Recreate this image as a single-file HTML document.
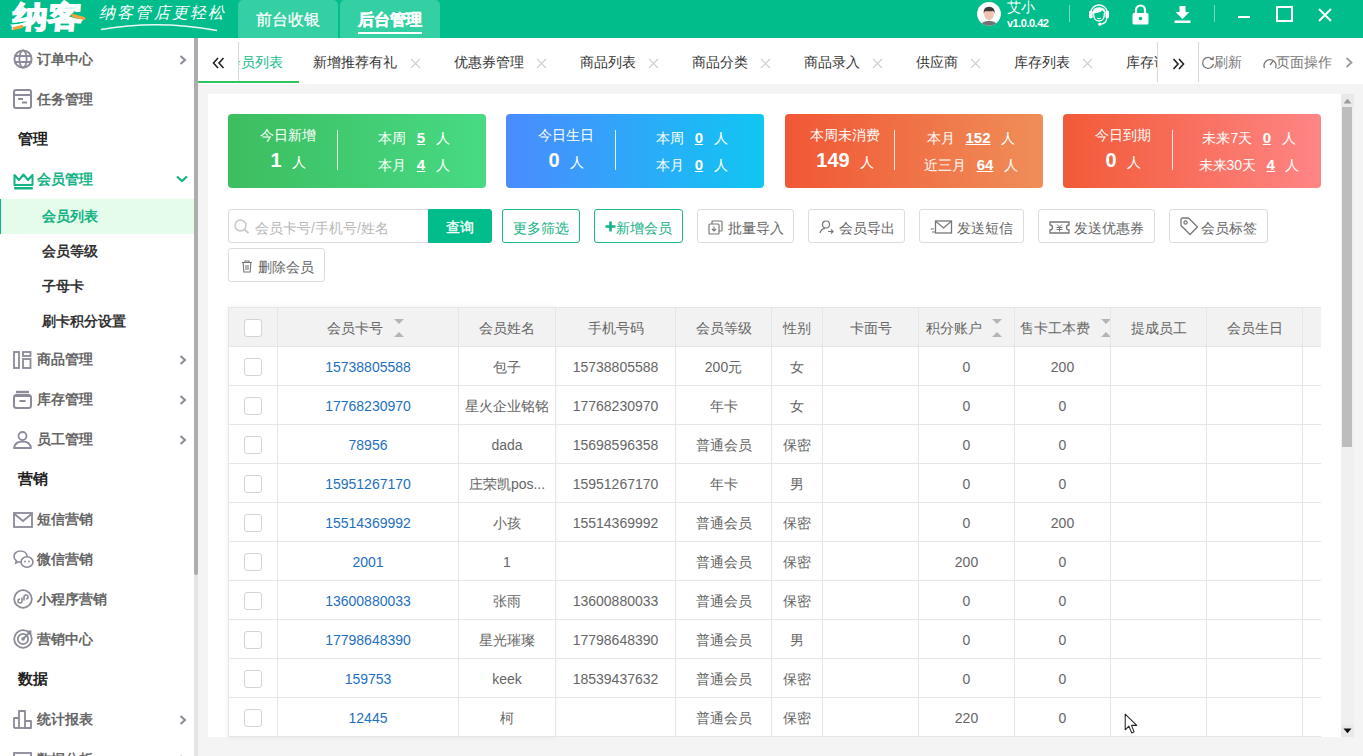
<!DOCTYPE html>
<html><head><meta charset="utf-8"><title>会员列表</title>
<style>
*{margin:0;padding:0;box-sizing:border-box}
html,body{width:1363px;height:756px;overflow:hidden}
body{position:relative;background:#f4f4f4;font-family:"Liberation Sans",sans-serif;font-size:14px;color:#333}
.a{position:absolute}
svg{position:absolute;display:block}
#hdr{position:absolute;left:0;top:0;width:1363px;height:38px;background:#00bd8b}
.htab{position:absolute;top:0;height:38px;width:100px;background:#34cfa3;border-radius:5px 5px 0 0;color:#fff;font-size:16px;line-height:40px;text-align:center}
#side{position:absolute;left:0;top:38px;width:194px;height:718px;background:#fff}
.mi{position:absolute;left:0;width:194px;height:40px;line-height:40px;font-size:14px;font-weight:bold;color:#666}
.mi span{position:absolute;left:37px;top:0}
.mi svg{left:13px;top:10px}
.mi svg.chev{position:absolute;left:179px;top:16px;width:8px;height:10px}
.sec{position:absolute;left:18px;height:40px;line-height:40px;font-size:15px;font-weight:bold;color:#222}
.sub{position:absolute;left:0;width:194px;height:35px;line-height:35px;font-size:14px;font-weight:bold;color:#333}
.sub span{position:absolute;left:42px}
#tabs{position:absolute;left:198px;top:38px;width:1165px;height:46px;background:#fff}
.tt{position:absolute;top:14px;height:20px;line-height:20px;font-size:14px;color:#333;white-space:nowrap}
#panel{position:absolute;left:208px;top:94px;width:1133px;height:643px;background:#fff}
.card{position:absolute;top:114px;height:74px;width:258px;border-radius:4px;color:#fff}
.card .t{position:absolute;top:9.5px;height:22px;line-height:22px;font-size:14px;text-align:center;white-space:nowrap}
.card .n{position:absolute;top:32px;height:28px;line-height:28px;text-align:center;white-space:nowrap}
.card .n b{font-size:20px;margin-right:10px}
.card .dv{position:absolute;left:109px;top:16px;width:1px;height:40px;background:rgba(255,255,255,.85)}
.card .r{position:absolute;height:22px;line-height:22px;font-size:14px;text-align:center;white-space:nowrap}
.card .r b{text-decoration:underline;font-size:15px;margin:0 10.5px 0 10.5px}
.btn{position:absolute;top:209px;height:34px;border:1px solid #dcdcdc;border-radius:3px;background:#fff;color:#666;font-size:14px;line-height:32px;white-space:nowrap}
.btn span{position:absolute;top:2px}
.btn.g{border-color:#19b98a;color:#13b386}
.tx{position:absolute;top:58px}
.tb{position:absolute}
.hl{position:absolute;left:228px;width:1093px;height:1px;background:#e6e6e6}
.vl{position:absolute;top:307px;width:1px;height:430px;background:#e6e6e6}
.cell{position:absolute;height:38px;line-height:40px;text-align:center;color:#666;font-size:14px;white-space:nowrap;overflow:hidden}
.cell.th{color:#666}
.cell.lk{color:#1e6fc0}
.cb{position:absolute;width:18px;height:18px;border:1px solid #d4d4d4;border-radius:3px;background:#fff}
.sort{display:inline-block;position:relative;width:15px;height:18px;margin-left:10.5px;vertical-align:middle;top:-1px}
.sort b{position:absolute;left:0;width:0;height:0;border-left:5px solid transparent;border-right:5px solid transparent}
.sort .dn{top:0;border-top:5px solid #b5b5b5}
.sort .up{top:13px;border-bottom:5px solid #b5b5b5}

</style></head><body>
<!-- header -->
<div id="hdr"></div>
<svg style="left:8px;top:0" width="84" height="36" viewBox="0 0 84 36">
  <text x="6" y="27" font-family="Liberation Sans" font-weight="bold" font-size="30" fill="#fff" stroke="#fff" stroke-width="1.4" textLength="70" lengthAdjust="spacingAndGlyphs" transform="skewX(-5)">纳客</text>
  <path d="M6 28.5 L14 26.5" stroke="#f4a23a" stroke-width="3" stroke-linecap="round"/>
  <path d="M65 15.5 L76 18.5" stroke="#f4a23a" stroke-width="3" stroke-linecap="round"/>
</svg>
<div class="a" style="left:99px;top:2px;height:22px;line-height:22px;font-family:'Liberation Serif',serif;font-style:italic;font-size:16px;color:#fff;letter-spacing:2.2px;white-space:nowrap">纳客管店更轻松</div>
<svg style="left:98px;top:21px" width="130" height="12" viewBox="0 0 130 12"><path d="M3 8.5 Q60 -1.5 119 9.5" stroke="#fff" stroke-width="1.3" fill="none" opacity=".9"/></svg>
<div class="htab" style="left:238px;-webkit-text-stroke:.2px #fff">前台收银</div>
<div class="htab" style="left:340px;font-weight:bold;-webkit-text-stroke:.5px #fff">后台管理</div>
<div class="a" style="left:358px;top:32px;width:64px;height:2px;background:#fff"></div>

<!-- right header -->
<svg style="left:976px;top:1px" width="26" height="26" viewBox="0 0 26 26">
  <clipPath id="cc"><circle cx="13" cy="12.8" r="11.9"/></clipPath>
  <circle cx="13" cy="12.8" r="11.9" fill="#fff"/>
  <g clip-path="url(#cc)">
   <path d="M3.5 26 Q5 20 13 19.8 Q21 20 22.5 26Z" fill="#737373"/>
   <ellipse cx="13" cy="13" rx="4.9" ry="6" fill="#f0c2b2"/>
   <path d="M7.8 12.8 Q7 5.8 13 5.8 Q19.2 5.8 18.6 12.8 Q18 9.6 16.5 10 Q13 10.6 9.5 10 Q8.2 10.4 7.8 12.8Z" fill="#3b3b3b"/>
  </g>
</svg>
<div class="a" style="left:1007px;top:-2px;height:18px;line-height:18px;font-size:14px;color:#fff">艾小</div>
<div class="a" style="left:1007px;top:16px;height:14px;line-height:14px;font-size:11px;font-weight:bold;color:#fff;letter-spacing:-.5px">v1.0.0.42</div>
<div class="a" style="left:1069px;top:5px;width:1px;height:17px;background:rgba(255,255,255,.45)"></div>
<svg style="left:1088px;top:2px" width="22" height="24" viewBox="0 0 22 24">
 <path d="M2.8 10 A8.3 8.3 0 0 1 19.2 10" stroke="#fff" stroke-width="1.5" fill="none"/>
 <path d="M4.2 12.5 Q4 5.2 11 5.2 Q18 5.2 17.8 12.5 Q16 9.5 14.2 8.2 Q12.5 10.8 6.2 11.2 Z" fill="#fff"/>
 <path d="M5.6 11 Q5.4 19 11 19 Q16.6 19 16.4 11" stroke="#fff" stroke-width="1.3" fill="none"/>
 <rect x="1" y="8.8" width="3.6" height="7.4" rx="1.2" fill="#fff"/>
 <rect x="17.4" y="8.8" width="3.6" height="7.4" rx="1.2" fill="#fff"/>
 <path d="M18.8 15.5 Q18.6 21.8 12.5 22.2" stroke="#fff" stroke-width="1.3" fill="none"/>
 <circle cx="11.8" cy="22.2" r="1.6" fill="#fff"/>
 <path d="M9.2 16.2 Q11 17.2 12.8 16.2" stroke="#fff" stroke-width="1" fill="none"/>
</svg>
<svg style="left:1132px;top:4px" width="17" height="21" viewBox="0 0 17 21">
  <path d="M4 9 V6 A4.5 4.5 0 0 1 13 6 V9" stroke="#fff" stroke-width="2.2" fill="none"/>
  <rect x="0.5" y="9" width="16" height="11.5" rx="1.5" fill="#fff"/>
  <circle cx="8.5" cy="14.5" r="1.8" fill="#00bd8b"/>
</svg>
<svg style="left:1174px;top:5px" width="17" height="19" viewBox="0 0 17 19">
  <path d="M5.5 1 H11.5 V7 H15.5 L8.5 14 L1.5 7 H5.5Z" fill="#fff"/>
  <rect x="0.5" y="15.5" width="16" height="2.5" fill="#fff"/>
</svg>
<div class="a" style="left:1214px;top:5px;width:1px;height:17px;background:rgba(255,255,255,.45)"></div>
<div class="a" style="left:1238px;top:16px;width:12px;height:2px;background:#fff"></div>
<div class="a" style="left:1276px;top:6px;width:17px;height:16px;border:2px solid #fff"></div>
<svg style="left:1318px;top:8px" width="14" height="14" viewBox="0 0 14 14"><path d="M1 1 L13 13 M13 1 L1 13" stroke="#fff" stroke-width="2"/></svg>

<!-- sidebar -->
<div id="side">
  <div class="mi" style="top:1px"><svg width="20" height="20" viewBox="0 0 20 20" style="top:10px"><circle cx="10" cy="10" r="8.6" stroke="#8b8b99" stroke-width="2" fill="none"/><ellipse cx="10" cy="10" rx="3.6" ry="8.6" stroke="#8b8b99" stroke-width="1.8" fill="none"/><path d="M1.5 7 H18.5 M1.5 13 H18.5" stroke="#8b8b99" stroke-width="1.8"/></svg><span>订单中心</span>
   <svg class="chev" viewBox="0 0 8 10"><path d="M1.5 1 L6 5 L1.5 9" stroke="#8b8b99" stroke-width="2.1" fill="none"/></svg></div>
  <div class="mi" style="top:41px"><svg width="19" height="20" viewBox="0 0 19 20" style="top:10px"><rect x="1" y="1" width="17" height="18" rx="2" stroke="#8b8b99" stroke-width="2" fill="none"/><path d="M1 6 H18 M5 10 H10 M9 13.5 H14" stroke="#8b8b99" stroke-width="1.8"/></svg><span>任务管理</span></div>
  <div class="sec" style="top:81px">管理</div>
  <div class="mi" style="top:121px;color:#13b386"><svg width="21" height="17" viewBox="0 0 21 17" style="top:14px"><path d="M1.5 12 V2 L6 7 L10.5 1.5 L15 7 L19.5 2 V12 Z" stroke="#13b386" stroke-width="2" fill="none" stroke-linejoin="round"/><rect x="1" y="14" width="19" height="2.6" rx="1" fill="#13b386"/></svg><span>会员管理</span>
   <svg class="chev" style="left:176px;top:16px;width:12px;height:8px" viewBox="0 0 12 8"><path d="M1 1.5 L6 6 L11 1.5" stroke="#13b386" stroke-width="2.2" fill="none"/></svg></div>
  <div class="sub" style="top:161px;background:#e5fcea;color:#13b386"><div class="a" style="left:0;top:0;width:1px;height:35px;background:#0fb386"></div><span>会员列表</span></div>
  <div class="sub" style="top:196px"><span>会员等级</span></div>
  <div class="sub" style="top:231px"><span>子母卡</span></div>
  <div class="sub" style="top:266px"><span>刷卡积分设置</span></div>
  <div class="mi" style="top:301px"><svg width="19" height="18" viewBox="0 0 19 18" style="top:12px"><rect x="1" y="1" width="5" height="16" stroke="#8b8b99" stroke-width="1.8" fill="none"/><rect x="10" y="1" width="7.5" height="4" stroke="#8b8b99" stroke-width="1.8" fill="none"/><rect x="10" y="8" width="7.5" height="9" stroke="#8b8b99" stroke-width="1.8" fill="none"/></svg><span>商品管理</span>
   <svg class="chev" viewBox="0 0 8 10"><path d="M1.5 1 L6 5 L1.5 9" stroke="#8b8b99" stroke-width="2.1" fill="none"/></svg></div>
  <div class="mi" style="top:341px"><svg width="19" height="19" viewBox="0 0 19 19" style="top:11px"><path d="M3 2 H16" stroke="#8b8b99" stroke-width="2.4"/><rect x="1" y="5" width="17" height="13" rx="2.5" stroke="#8b8b99" stroke-width="2" fill="none"/><path d="M1 6 H18 M6.5 11 H12.5" stroke="#8b8b99" stroke-width="2.2"/></svg><span>库存管理</span>
   <svg class="chev" viewBox="0 0 8 10"><path d="M1.5 1 L6 5 L1.5 9" stroke="#8b8b99" stroke-width="2.1" fill="none"/></svg></div>
  <div class="mi" style="top:381px"><svg width="19" height="18" viewBox="0 0 19 18" style="top:12px"><circle cx="9.5" cy="5" r="4" stroke="#8b8b99" stroke-width="1.8" fill="none"/><path d="M1 17 Q2 10.5 9.5 10.5 Q17 10.5 18 17 Z" stroke="#8b8b99" stroke-width="1.8" fill="none" stroke-linejoin="round"/></svg><span>员工管理</span>
   <svg class="chev" viewBox="0 0 8 10"><path d="M1.5 1 L6 5 L1.5 9" stroke="#8b8b99" stroke-width="2.1" fill="none"/></svg></div>
  <div class="sec" style="top:421px">营销</div>
  <div class="mi" style="top:461px"><svg width="20" height="16" viewBox="0 0 20 16" style="top:13px"><rect x="1" y="1" width="18" height="14" stroke="#8b8b99" stroke-width="1.8" fill="none"/><path d="M1.5 2 L10 9 L18.5 2" stroke="#8b8b99" stroke-width="1.8" fill="none"/></svg><span>短信营销</span></div>
  <div class="mi" style="top:501px"><svg width="21" height="19" viewBox="0 0 21 19" style="top:11px"><path d="M7.5 1 C3.5 1 1 3.6 1 6.6 C1 8.4 2 9.8 3.4 10.8 L2.8 13 L5.4 11.8 C6 12 6.8 12.1 7.5 12.1" stroke="#8b8b99" stroke-width="1.6" fill="none"/><path d="M7.5 1 C11 1 13.7 3.2 14 6" stroke="#8b8b99" stroke-width="1.6" fill="none"/><ellipse cx="14" cy="12" rx="6" ry="5.2" stroke="#8b8b99" stroke-width="1.6" fill="none"/><circle cx="12" cy="11.5" r=".9" fill="#8b8b99"/><circle cx="16" cy="11.5" r=".9" fill="#8b8b99"/></svg><span>微信营销</span></div>
  <div class="mi" style="top:541px"><svg width="20" height="20" viewBox="0 0 20 20" style="top:10px"><circle cx="10" cy="10" r="8.8" stroke="#8b8b99" stroke-width="1.8" fill="none"/><path d="M9 8.5 V12 A2 2 0 1 1 7 10 M11 11.5 V8 A2 2 0 1 1 13 10" stroke="#8b8b99" stroke-width="1.6" fill="none"/></svg><span>小程序营销</span></div>
  <div class="mi" style="top:581px"><svg width="20" height="20" viewBox="0 0 20 20" style="top:10px"><circle cx="10" cy="10" r="8.8" stroke="#8b8b99" stroke-width="1.8" fill="none"/><circle cx="10" cy="10" r="5.2" stroke="#8b8b99" stroke-width="1.8" fill="none"/><circle cx="10" cy="10" r="1.8" fill="#8b8b99"/><path d="M10 10 L17 3 M14.5 2.5 L17.5 2.5 L17.5 5.5" stroke="#8b8b99" stroke-width="1.8" fill="none"/></svg><span>营销中心</span></div>
  <div class="sec" style="top:621px">数据</div>
  <div class="mi" style="top:661px"><svg width="19" height="19" viewBox="0 0 19 19" style="top:11px"><path d="M1 18 V8 H6 V18 M6 18 V1 H12 V18 M12 18 V11 H18 V18 Z" stroke="#8b8b99" stroke-width="1.8" fill="none" stroke-linejoin="round"/><path d="M1 18 H18" stroke="#8b8b99" stroke-width="1.8"/></svg><span>统计报表</span>
   <svg class="chev" viewBox="0 0 8 10"><path d="M1.5 1 L6 5 L1.5 9" stroke="#8b8b99" stroke-width="2.1" fill="none"/></svg></div>
  <div class="mi" style="top:701px"><svg width="19" height="19" viewBox="0 0 19 19" style="top:13px"><rect x="1" y="1" width="17" height="15" stroke="#8b8b99" stroke-width="1.8" fill="none"/></svg><span>数据分析</span>
   <svg class="chev" viewBox="0 0 8 10"><path d="M1.5 1 L6 5 L1.5 9" stroke="#8b8b99" stroke-width="2.1" fill="none"/></svg></div>
</div>
<div class="a" style="left:194px;top:38px;width:4px;height:718px;background:#e4e4e4"></div>
<div class="a" style="left:194px;top:38px;width:4px;height:537px;background:#adadad;border-radius:0 0 2px 2px"></div>

<!-- tabs bar -->
<div id="tabs"></div>
<div class="a" style="left:198px;top:81px;width:101px;height:2px;background:#2dc462"></div>
<div class="a" style="left:198px;top:38px;width:960px;height:46px;overflow:hidden">
  <div class="tt" style="left:29px;color:#12bb8a">会员列表</div>
  <div class="tt" style="left:115px">新增推荐有礼</div>
  <div class="tt" style="left:256px">优惠券管理</div>
  <div class="tt" style="left:382px">商品列表</div>
  <div class="tt" style="left:494px">商品分类</div>
  <div class="tt" style="left:606px">商品录入</div>
  <div class="tt" style="left:718px">供应商</div>
  <div class="tt" style="left:816px">库存列表</div>
  <div class="tt" style="left:928px">库存详情</div>
</div>
<svg style="left:410px;top:58px" width="11" height="11" viewBox="0 0 11 11"><path d="M1 1 L10 10 M10 1 L1 10" stroke="#cfcfcf" stroke-width="1.1"/></svg>
<svg style="left:536px;top:58px" width="11" height="11" viewBox="0 0 11 11"><path d="M1 1 L10 10 M10 1 L1 10" stroke="#cfcfcf" stroke-width="1.1"/></svg>
<svg style="left:648px;top:58px" width="11" height="11" viewBox="0 0 11 11"><path d="M1 1 L10 10 M10 1 L1 10" stroke="#cfcfcf" stroke-width="1.1"/></svg>
<svg style="left:760px;top:58px" width="11" height="11" viewBox="0 0 11 11"><path d="M1 1 L10 10 M10 1 L1 10" stroke="#cfcfcf" stroke-width="1.1"/></svg>
<svg style="left:872px;top:58px" width="11" height="11" viewBox="0 0 11 11"><path d="M1 1 L10 10 M10 1 L1 10" stroke="#cfcfcf" stroke-width="1.1"/></svg>
<svg style="left:970px;top:58px" width="11" height="11" viewBox="0 0 11 11"><path d="M1 1 L10 10 M10 1 L1 10" stroke="#cfcfcf" stroke-width="1.1"/></svg>
<svg style="left:1082px;top:58px" width="11" height="11" viewBox="0 0 11 11"><path d="M1 1 L10 10 M10 1 L1 10" stroke="#cfcfcf" stroke-width="1.1"/></svg>
<!-- « button -->
<div class="a" style="left:198px;top:42px;width:41px;height:39px;background:#fff;border-right:1px solid #d8d8d8"></div>
<svg style="left:212px;top:57px" width="13" height="12" viewBox="0 0 13 12"><path d="M6 1 L1.5 6 L6 11 M11.5 1 L7 6 L11.5 11" stroke="#222" stroke-width="1.6" fill="none"/></svg>
<!-- » button -->
<div class="a" style="left:1157px;top:42px;width:42px;height:40px;background:#fff;border-left:1px solid #d8d8d8;border-right:1px solid #d8d8d8"></div>
<svg style="left:1172px;top:58px" width="13" height="12" viewBox="0 0 13 12"><path d="M1.5 1 L6 6 L1.5 11 M7 1 L11.5 6 L7 11" stroke="#222" stroke-width="1.6" fill="none"/></svg>
<svg style="left:1201px;top:56px" width="14" height="14" viewBox="0 0 14 14"><path d="M11.5 3.5 A5.5 5.5 0 1 0 12.5 8" stroke="#777" stroke-width="1.3" fill="none"/><path d="M9 3 L12 3.5 L12.2 0.8" stroke="#777" stroke-width="1.3" fill="none"/></svg>
<div class="tt" style="left:1214px;top:52px;color:#777">刷新</div>
<svg style="left:1263px;top:56px" width="14" height="14" viewBox="0 0 14 14"><path d="M1.5 12 A6 6 0 1 1 12.5 12" stroke="#777" stroke-width="1.3" fill="none"/><path d="M7 9 L10 5" stroke="#777" stroke-width="1.3"/></svg>
<div class="tt" style="left:1276px;top:52px;color:#777">页面操作</div>
<svg style="left:1345px;top:57px" width="9" height="11" viewBox="0 0 9 11"><path d="M1.5 1 L6.5 5.5 L1.5 10" stroke="#999" stroke-width="1.7" fill="none"/></svg>

<!-- panel -->
<div id="panel"></div>
<div class="a" style="left:1341px;top:94px;width:13px;height:643px;background:#f0f0f0"></div>
<div class="a" style="left:1341px;top:94px;width:13px;height:13px;background:#e8e9eb"></div>
<svg style="left:1343px;top:98px" width="9" height="6" viewBox="0 0 9 6"><path d="M0.5 5.5 L4.5 0.8 L8.5 5.5Z" fill="#9a9a9a"/></svg>
<div class="a" style="left:1342px;top:107px;width:10px;height:340px;background:#bdbdbd"></div>
<div class="a" style="left:1341px;top:725px;width:13px;height:12px;background:#e8e9eb"></div>
<svg style="left:1343px;top:728px" width="9" height="6" viewBox="0 0 9 6"><path d="M0.5 0.5 L8.5 0.5 L4.5 5.2Z" fill="#111"/></svg>

<!-- cards -->
<div class="card" style="left:228px;background:linear-gradient(90deg,#3dbd60,#47da84)">
  <div class="t" style="left:0;width:120px">今日新增</div>
  <div class="n" style="left:0;width:120px"><b>1</b>人</div>
  <div class="dv"></div>
  <div class="r" style="left:112px;width:148px;top:13px">本周<b>5</b>人</div>
  <div class="r" style="left:112px;width:148px;top:40px">本月<b>4</b>人</div>
</div>
<div class="card" style="left:506px;background:linear-gradient(90deg,#4b8bff,#10c6f2)">
  <div class="t" style="left:0;width:120px">今日生日</div>
  <div class="n" style="left:0;width:120px"><b>0</b>人</div>
  <div class="dv"></div>
  <div class="r" style="left:112px;width:148px;top:13px">本周<b>0</b>人</div>
  <div class="r" style="left:112px;width:148px;top:40px">本月<b>0</b>人</div>
</div>
<div class="card" style="left:785px;background:linear-gradient(90deg,#f15735,#ef8e58)">
  <div class="t" style="left:0;width:120px">本周未消费</div>
  <div class="n" style="left:0;width:120px"><b>149</b>人</div>
  <div class="dv"></div>
  <div class="r" style="left:112px;width:148px;top:13px">本月<b>152</b>人</div>
  <div class="r" style="left:112px;width:148px;top:40px">近三月<b>64</b>人</div>
</div>
<div class="card" style="left:1063px;background:linear-gradient(90deg,#f25a37,#ff8585)">
  <div class="t" style="left:0;width:120px">今日到期</div>
  <div class="n" style="left:0;width:120px"><b>0</b>人</div>
  <div class="dv"></div>
  <div class="r" style="left:112px;width:148px;top:13px">未来7天<b>0</b>人</div>
  <div class="r" style="left:112px;width:148px;top:40px">未来30天<b>4</b>人</div>
</div>

<!-- toolbar -->
<div class="btn" style="left:228px;width:201px;border-radius:3px 0 0 3px"><svg style="left:5px;top:9px" width="16" height="15" viewBox="0 0 16 15"><circle cx="6.5" cy="6.5" r="5.5" stroke="#c8c8c8" stroke-width="1.5" fill="none"/><path d="M10.5 10.5 L14.5 14" stroke="#c8c8c8" stroke-width="1.7"/></svg><span style="left:26px;color:#b8b8b8">会员卡号/手机号/姓名</span></div>
<div class="btn" style="left:428px;width:64px;background:#00bd8b;border-color:#00bd8b;color:#fff;border-radius:0 3px 3px 0"><span style="left:17px;top:1px;-webkit-text-stroke:.35px #fff">查询</span></div>
<div class="btn g" style="left:502px;width:78px"><span style="left:10px">更多筛选</span></div>
<div class="btn g" style="left:594px;width:89px"><svg style="left:10px;top:11px" width="11" height="11" viewBox="0 0 11 11"><path d="M5.5 0.5 V10.5 M0.5 5.5 H10.5" stroke="#13b386" stroke-width="2.6"/></svg><span style="left:21px">新增会员</span></div>
<div class="btn" style="left:697px;width:97px"><svg style="left:10px;top:10px" width="15" height="15" viewBox="0 0 15 15"><rect x="4" y="1" width="10" height="10" rx="1" stroke="#777" stroke-width="1.2" fill="none"/><rect x="1" y="4" width="10" height="10" rx="1" stroke="#777" stroke-width="1.2" fill="#fff"/><path d="M6 6.5 V11 M4 9 L6 11 L8 9" stroke="#777" stroke-width="1.1" fill="none"/></svg><span style="left:30px">批量导入</span></div>
<div class="btn" style="left:808px;width:97px"><svg style="left:10px;top:10px" width="15" height="14" viewBox="0 0 15 14"><circle cx="7" cy="4.5" r="3.5" stroke="#777" stroke-width="1.2" fill="none"/><path d="M1 13 Q2 8.5 6 8.3 M9 11.5 H14 M12 9.5 L14 11.5 L12 13.5" stroke="#777" stroke-width="1.2" fill="none"/></svg><span style="left:30px">会员导出</span></div>
<div class="btn" style="left:919px;width:105px"><svg style="left:10px;top:10px" width="23" height="14" viewBox="0 0 23 14"><rect x="5.5" y="1" width="16" height="12" stroke="#777" stroke-width="1.3" fill="none"/><path d="M6 1.5 L13.5 8 L21 1.5 M0.5 9 H4 M2 12 H5" stroke="#777" stroke-width="1.2" fill="none"/></svg><span style="left:37px">发送短信</span></div>
<div class="btn" style="left:1038px;width:117px"><svg style="left:10px;top:11px" width="21" height="13" viewBox="0 0 21 13"><path d="M1 1 H20 V4 A2.5 2.5 0 0 0 20 9 V12 H1 V9 A2.5 2.5 0 0 0 1 4 Z" stroke="#777" stroke-width="1.3" fill="none"/><path d="M8 3.5 L10.5 6 L13 3.5 M7.5 6.5 H13.5 M7.5 8.5 H13.5 M10.5 6 V10.5" stroke="#777" stroke-width="1" fill="none"/></svg><span style="left:35px">发送优惠券</span></div>
<div class="btn" style="left:1169px;width:99px"><svg style="left:10px;top:7px" width="19" height="19" viewBox="0 0 19 19"><path d="M1 2 L1 8.5 L10 17.5 L17.5 10 L8.5 1 L2 1Z" stroke="#777" stroke-width="1.3" fill="none" stroke-linejoin="round"/><circle cx="5.5" cy="5.5" r="1.6" stroke="#777" stroke-width="1.2" fill="none"/></svg><span style="left:31px">会员标签</span></div>
<div class="btn" style="left:228px;top:248px;width:97px"><svg style="left:12px;top:11px" width="12" height="13" viewBox="0 0 12 13"><path d="M1 2.5 H11 M4 2.5 V1 H8 V2.5 M2.2 2.5 L2.8 12 H9.2 L9.8 2.5 M5 5 V10 M7 5 V10" stroke="#777" stroke-width="1.1" fill="none"/></svg><span style="left:29px">删除会员</span></div>

<!-- cursor -->
<svg style="left:1124px;top:713px;z-index:5" width="15" height="22" viewBox="0 0 14 21"><path d="M1 1 L1 16 L4.5 12.5 L7.2 19 L9.5 18 L7 11.8 L12 11.8 Z" fill="#fff" stroke="#222" stroke-width="1" stroke-linejoin="round"/></svg>

<div id="table">
<div class="tb" style="left:228px;top:307px;width:327px;height:430px;box-shadow:0 0 6px rgba(0,0,0,.07);background:#fff"></div>
<div class="tb" style="left:228px;top:307px;width:1093px;height:39px;background:#f2f2f2"></div>
<div class="hl" style="top:307px"></div>
<div class="hl" style="top:346px"></div>
<div class="hl" style="top:385px"></div>
<div class="hl" style="top:424px"></div>
<div class="hl" style="top:463px"></div>
<div class="hl" style="top:502px"></div>
<div class="hl" style="top:541px"></div>
<div class="hl" style="top:580px"></div>
<div class="hl" style="top:619px"></div>
<div class="hl" style="top:658px"></div>
<div class="hl" style="top:697px"></div>
<div class="hl" style="top:736px"></div>
<div class="vl" style="left:228px"></div>
<div class="vl" style="left:277px"></div>
<div class="vl" style="left:458px"></div>
<div class="vl" style="left:555px"></div>
<div class="vl" style="left:675px"></div>
<div class="vl" style="left:771px"></div>
<div class="vl" style="left:822px"></div>
<div class="vl" style="left:918px"></div>
<div class="vl" style="left:1014px"></div>
<div class="vl" style="left:1110px"></div>
<div class="vl" style="left:1206px"></div>
<div class="vl" style="left:1302px"></div>
<div class="cb" style="left:244px;top:319px"></div>
<div class="cell th" style="left:278px;top:308px;width:180px"><span>会员卡号</span><i class="sort"><b class="dn"></b><b class="up"></b></i></div>
<div class="cell th" style="left:459px;top:308px;width:96px">会员姓名</div>
<div class="cell th" style="left:556px;top:308px;width:119px">手机号码</div>
<div class="cell th" style="left:676px;top:308px;width:95px">会员等级</div>
<div class="cell th" style="left:772px;top:308px;width:50px">性别</div>
<div class="cell th" style="left:823px;top:308px;width:95px">卡面号</div>
<div class="cell th" style="left:919px;top:308px;width:95px"><span>积分账户</span><i class="sort"><b class="dn"></b><b class="up"></b></i></div>
<div class="cell th" style="left:1015px;top:308px;width:95px;text-align:left;padding-left:5px"><span>售卡工本费</span><i class="sort"><b class="dn"></b><b class="up"></b></i></div>
<div class="cell th" style="left:1111px;top:308px;width:95px">提成员工</div>
<div class="cell th" style="left:1207px;top:308px;width:95px">会员生日</div>
<div class="cell th" style="left:1303px;top:308px;width:18px"></div>
<div class="cb" style="left:244px;top:358px"></div>
<div class="cell lk" style="left:278px;top:347px;width:180px">15738805588</div>
<div class="cell" style="left:459px;top:347px;width:96px">包子</div>
<div class="cell" style="left:556px;top:347px;width:119px">15738805588</div>
<div class="cell" style="left:676px;top:347px;width:95px">200元</div>
<div class="cell" style="left:772px;top:347px;width:50px">女</div>
<div class="cell" style="left:823px;top:347px;width:95px"></div>
<div class="cell" style="left:919px;top:347px;width:95px">0</div>
<div class="cell" style="left:1015px;top:347px;width:95px">200</div>
<div class="cb" style="left:244px;top:397px"></div>
<div class="cell lk" style="left:278px;top:386px;width:180px">17768230970</div>
<div class="cell" style="left:459px;top:386px;width:96px">星火企业铭铭</div>
<div class="cell" style="left:556px;top:386px;width:119px">17768230970</div>
<div class="cell" style="left:676px;top:386px;width:95px">年卡</div>
<div class="cell" style="left:772px;top:386px;width:50px">女</div>
<div class="cell" style="left:823px;top:386px;width:95px"></div>
<div class="cell" style="left:919px;top:386px;width:95px">0</div>
<div class="cell" style="left:1015px;top:386px;width:95px">0</div>
<div class="cb" style="left:244px;top:436px"></div>
<div class="cell lk" style="left:278px;top:425px;width:180px">78956</div>
<div class="cell" style="left:459px;top:425px;width:96px">dada</div>
<div class="cell" style="left:556px;top:425px;width:119px">15698596358</div>
<div class="cell" style="left:676px;top:425px;width:95px">普通会员</div>
<div class="cell" style="left:772px;top:425px;width:50px">保密</div>
<div class="cell" style="left:823px;top:425px;width:95px"></div>
<div class="cell" style="left:919px;top:425px;width:95px">0</div>
<div class="cell" style="left:1015px;top:425px;width:95px">0</div>
<div class="cb" style="left:244px;top:475px"></div>
<div class="cell lk" style="left:278px;top:464px;width:180px">15951267170</div>
<div class="cell" style="left:459px;top:464px;width:96px">庄荣凯pos...</div>
<div class="cell" style="left:556px;top:464px;width:119px">15951267170</div>
<div class="cell" style="left:676px;top:464px;width:95px">年卡</div>
<div class="cell" style="left:772px;top:464px;width:50px">男</div>
<div class="cell" style="left:823px;top:464px;width:95px"></div>
<div class="cell" style="left:919px;top:464px;width:95px">0</div>
<div class="cell" style="left:1015px;top:464px;width:95px">0</div>
<div class="cb" style="left:244px;top:514px"></div>
<div class="cell lk" style="left:278px;top:503px;width:180px">15514369992</div>
<div class="cell" style="left:459px;top:503px;width:96px">小孩</div>
<div class="cell" style="left:556px;top:503px;width:119px">15514369992</div>
<div class="cell" style="left:676px;top:503px;width:95px">普通会员</div>
<div class="cell" style="left:772px;top:503px;width:50px">保密</div>
<div class="cell" style="left:823px;top:503px;width:95px"></div>
<div class="cell" style="left:919px;top:503px;width:95px">0</div>
<div class="cell" style="left:1015px;top:503px;width:95px">200</div>
<div class="cb" style="left:244px;top:553px"></div>
<div class="cell lk" style="left:278px;top:542px;width:180px">2001</div>
<div class="cell" style="left:459px;top:542px;width:96px">1</div>
<div class="cell" style="left:556px;top:542px;width:119px"></div>
<div class="cell" style="left:676px;top:542px;width:95px">普通会员</div>
<div class="cell" style="left:772px;top:542px;width:50px">保密</div>
<div class="cell" style="left:823px;top:542px;width:95px"></div>
<div class="cell" style="left:919px;top:542px;width:95px">200</div>
<div class="cell" style="left:1015px;top:542px;width:95px">0</div>
<div class="cb" style="left:244px;top:592px"></div>
<div class="cell lk" style="left:278px;top:581px;width:180px">13600880033</div>
<div class="cell" style="left:459px;top:581px;width:96px">张雨</div>
<div class="cell" style="left:556px;top:581px;width:119px">13600880033</div>
<div class="cell" style="left:676px;top:581px;width:95px">普通会员</div>
<div class="cell" style="left:772px;top:581px;width:50px">保密</div>
<div class="cell" style="left:823px;top:581px;width:95px"></div>
<div class="cell" style="left:919px;top:581px;width:95px">0</div>
<div class="cell" style="left:1015px;top:581px;width:95px">0</div>
<div class="cb" style="left:244px;top:631px"></div>
<div class="cell lk" style="left:278px;top:620px;width:180px">17798648390</div>
<div class="cell" style="left:459px;top:620px;width:96px">星光璀璨</div>
<div class="cell" style="left:556px;top:620px;width:119px">17798648390</div>
<div class="cell" style="left:676px;top:620px;width:95px">普通会员</div>
<div class="cell" style="left:772px;top:620px;width:50px">男</div>
<div class="cell" style="left:823px;top:620px;width:95px"></div>
<div class="cell" style="left:919px;top:620px;width:95px">0</div>
<div class="cell" style="left:1015px;top:620px;width:95px">0</div>
<div class="cb" style="left:244px;top:670px"></div>
<div class="cell lk" style="left:278px;top:659px;width:180px">159753</div>
<div class="cell" style="left:459px;top:659px;width:96px">keek</div>
<div class="cell" style="left:556px;top:659px;width:119px">18539437632</div>
<div class="cell" style="left:676px;top:659px;width:95px">普通会员</div>
<div class="cell" style="left:772px;top:659px;width:50px">保密</div>
<div class="cell" style="left:823px;top:659px;width:95px"></div>
<div class="cell" style="left:919px;top:659px;width:95px">0</div>
<div class="cell" style="left:1015px;top:659px;width:95px">0</div>
<div class="cb" style="left:244px;top:709px"></div>
<div class="cell lk" style="left:278px;top:698px;width:180px">12445</div>
<div class="cell" style="left:459px;top:698px;width:96px">柯</div>
<div class="cell" style="left:556px;top:698px;width:119px"></div>
<div class="cell" style="left:676px;top:698px;width:95px">普通会员</div>
<div class="cell" style="left:772px;top:698px;width:50px">保密</div>
<div class="cell" style="left:823px;top:698px;width:95px"></div>
<div class="cell" style="left:919px;top:698px;width:95px">220</div>
<div class="cell" style="left:1015px;top:698px;width:95px">0</div>
</div>
</body></html>
